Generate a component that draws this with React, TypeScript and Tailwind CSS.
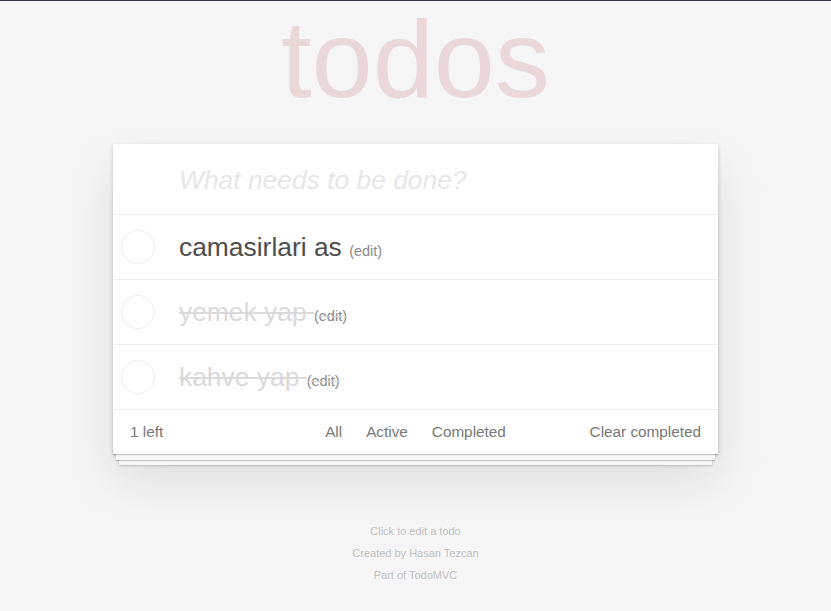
type Todo = { title: string; done: boolean }

const todos: Todo[] = [
  { title: 'camasirlari as', done: false },
  { title: 'yemek yap', done: true },
  { title: 'kahve yap', done: true },
]

const TodoItem = ({ title, done }: Todo) => (
  <li className="flex h-[65px] items-center border-b border-[#ededed]">
    <div className="flex w-[66px] shrink-0 items-center">
      <span className="ml-[8px] h-[34px] w-[34px] rounded-full border border-[#ededed]" />
    </div>
    <label
      className={
        done
          ? 'pt-[2px] text-[26.4px] leading-[1.2] text-[#d9d9d9] line-through'
          : 'pt-[2px] text-[26.4px] leading-[1.2] text-[#4d4d4d]'
      }
    >
      {title}{' '}
      <span className={done ? 'inline-block text-[14.5px] text-[#888] line-through decoration-[#d9d9d9]' : 'inline-block text-[14.5px] text-[#888]'}>
        (edit)
      </span>
    </label>
  </li>
)

export default function App() {
  const left = todos.filter((t) => !t.done).length

  return (
    <div className="min-h-screen border-t border-[#3b2e5a] bg-[#f5f5f5] font-['Liberation_Sans',Arial,sans-serif]">
      <h1 className="mt-[3px] text-center text-[110px] leading-[110px] font-thin text-[rgba(175,47,47,0.15)]">
        todos
      </h1>

      <section className="mx-auto mt-[30px] w-[605px] bg-white shadow-[0_2px_4px_0_rgba(0,0,0,0.2),0_25px_50px_0_rgba(0,0,0,0.1)]">
        <div className="flex h-[71px] items-center border-b border-[#ededed] pt-[4px] pl-[66px]">
          <input
            className="w-full bg-transparent text-[26.4px] text-[#4d4d4d] outline-none placeholder:text-[#e6e6e6] placeholder:italic"
            placeholder="What needs to be done?"
          />
        </div>

        <ul>
          {todos.map((t) => (
            <TodoItem key={t.title} {...t} />
          ))}
        </ul>

        <footer className="grid h-[44px] grid-cols-[1fr_auto_1fr] items-center px-[17px] text-[15.3px] text-[#777] shadow-[0_1px_1px_rgba(0,0,0,0.2),0_9px_0_-3px_#f6f6f6,0_10px_1px_-3px_rgba(0,0,0,0.2),0_17px_0_-6px_#f6f6f6,0_18px_2px_-6px_rgba(0,0,0,0.2)]">
          <span>{left} left</span>
          <div className="flex gap-[24px]">
            <span>All</span>
            <span>Active</span>
            <span>Completed</span>
          </div>
          <span className="text-right">Clear completed</span>
        </footer>
      </section>

      <div className="mt-[66px] text-center text-[11px] leading-[22px] text-[#bfbfbf]">
        <p>Click to edit a todo</p>
        <p>Created by Hasan Tezcan</p>
        <p>Part of TodoMVC</p>
      </div>
    </div>
  )
}
